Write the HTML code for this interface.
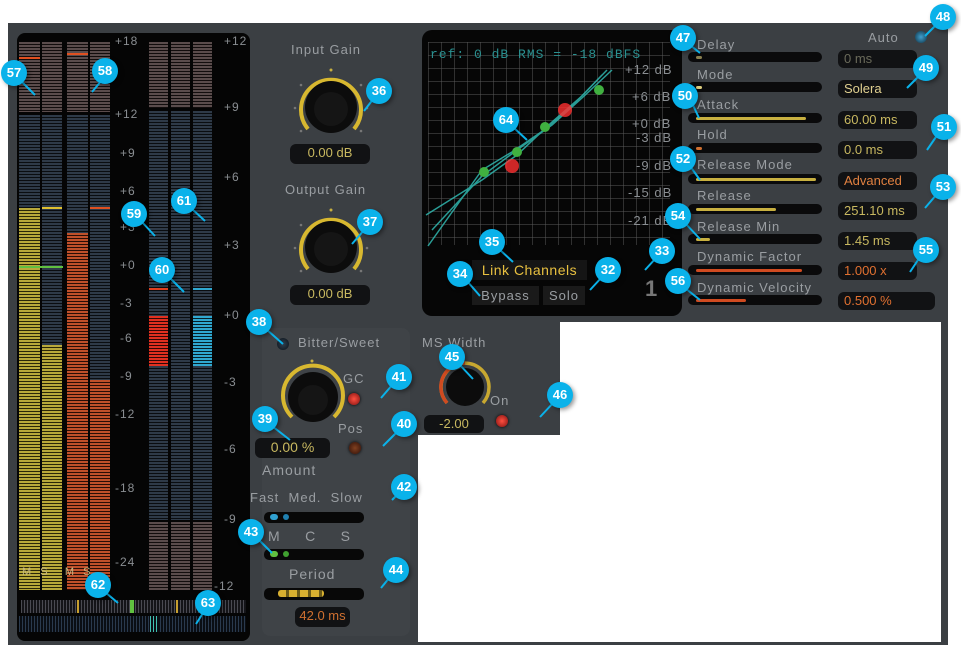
<!DOCTYPE html>
<html><head><meta charset="utf-8"><style>
*{margin:0;padding:0;box-sizing:border-box}
body{width:961px;height:649px;background:#fff;position:relative;overflow:hidden;font-family:"Liberation Sans","DejaVu Sans",sans-serif}
.a{position:absolute}
.t{position:absolute;color:#9a9ea2;font-size:13px;letter-spacing:1px;white-space:nowrap}
.sc{position:absolute;color:#8a8e92;font-size:12px;letter-spacing:1px}
.vb{position:absolute;background:#111214;border-radius:6px;color:#c8b860;font-size:13px;padding-left:6px;line-height:18px;white-space:nowrap}
.sl{position:absolute;background:#0a0a0b;border-radius:6px;height:10px;width:134px;left:688px}
.sf{position:absolute;height:3px;top:4px;left:8px;border-radius:2px}
.c{position:absolute;width:26px;height:26px;border-radius:50%;background:#0ab2ea;color:#fff;font-size:13px;font-weight:bold;text-align:center;line-height:26px;box-shadow:2px 2px 4px rgba(0,0,0,.4);z-index:5}
.col{position:absolute;background:repeating-linear-gradient(#2e3a48 0 2px,#0a0d10 2px 3px)}
.br{background:repeating-linear-gradient(#5a4c4c 0 2px,#120d0d 2px 3px)}
.ye{background:repeating-linear-gradient(#b8a83a 0 2px,#2a2608 2px 3px)}
.or{background:repeating-linear-gradient(#c0502a 0 2px,#2a0e06 2px 3px)}
.rd{background:repeating-linear-gradient(#e03020 0 2px,#300806 2px 3px)}
.cy{background:repeating-linear-gradient(#30a8d0 0 2px,#062028 2px 3px)}
.led{position:absolute;width:12px;height:12px;border-radius:50%;background:radial-gradient(#ff5040,#801010);box-shadow:0 0 3px #000}
</style></head><body>
<div class="a" style="left:8px;top:23px;width:940px;height:622px;background:#3b3f43"></div>
<!-- meters -->
<div class="a" style="left:17px;top:33px;width:233px;height:608px;background:#050505;border-radius:8px"></div>
<div class="col br" style="left:19px;top:42px;width:21px;height:70px"></div>
<div class="col br" style="left:42px;top:42px;width:20px;height:70px"></div>
<div class="col br" style="left:67px;top:42px;width:21px;height:70px"></div>
<div class="col br" style="left:90px;top:42px;width:20px;height:70px"></div>
<div class="col" style="left:19px;top:115px;width:21px;height:93px"></div>
<div class="col ye" style="left:19px;top:208px;width:21px;height:382px"></div>
<div class="col" style="left:42px;top:115px;width:20px;height:230px"></div>
<div class="col ye" style="left:42px;top:345px;width:20px;height:245px"></div>
<div class="col" style="left:67px;top:115px;width:21px;height:118px"></div>
<div class="col or" style="left:67px;top:233px;width:21px;height:357px"></div>
<div class="col" style="left:90px;top:115px;width:20px;height:265px"></div>
<div class="col or" style="left:90px;top:380px;width:20px;height:210px"></div>
<div class="a" style="left:19px;top:266px;width:44px;height:2px;background:#60c040"></div>
<div class="a" style="left:42px;top:207px;width:20px;height:2px;background:#e0c030"></div>
<div class="a" style="left:90px;top:207px;width:20px;height:2px;background:#e05020"></div>
<div class="a" style="left:19px;top:57px;width:21px;height:2px;background:#e05020"></div>
<div class="a" style="left:67px;top:53px;width:21px;height:2px;background:#e05020"></div>
<div class="t" style="left:22px;top:566px;color:#c8b880;font-size:11px">M&nbsp;&nbsp;S&nbsp;&nbsp;&nbsp;&nbsp;M&nbsp;&nbsp;S</div>
<div class="sc" style="left:115px;top:34px">+18</div><div class="sc" style="left:115px;top:107px">+12</div>
<div class="sc" style="left:120px;top:146px">+9</div><div class="sc" style="left:120px;top:184px">+6</div>
<div class="sc" style="left:120px;top:220px">+3</div><div class="sc" style="left:120px;top:258px">+0</div>
<div class="sc" style="left:120px;top:296px">-3</div><div class="sc" style="left:120px;top:331px">-6</div>
<div class="sc" style="left:120px;top:369px">-9</div><div class="sc" style="left:115px;top:407px">-12</div>
<div class="sc" style="left:115px;top:481px">-18</div><div class="sc" style="left:115px;top:555px">-24</div>
<div class="col br" style="left:149px;top:42px;width:19px;height:66px"></div>
<div class="col br" style="left:171px;top:42px;width:19px;height:66px"></div>
<div class="col br" style="left:193px;top:42px;width:19px;height:66px"></div>
<div class="col" style="left:149px;top:111px;width:19px;height:205px"></div>
<div class="col" style="left:171px;top:111px;width:19px;height:409px"></div>
<div class="col" style="left:193px;top:111px;width:19px;height:205px"></div>
<div class="col rd" style="left:149px;top:316px;width:19px;height:50px"></div>
<div class="col cy" style="left:193px;top:316px;width:19px;height:50px"></div>
<div class="col" style="left:149px;top:366px;width:19px;height:154px"></div>
<div class="col" style="left:193px;top:366px;width:19px;height:154px"></div>
<div class="col br" style="left:149px;top:522px;width:19px;height:68px"></div>
<div class="col br" style="left:171px;top:522px;width:19px;height:68px"></div>
<div class="col br" style="left:193px;top:522px;width:19px;height:68px"></div>
<div class="a" style="left:149px;top:288px;width:19px;height:2px;background:#e04020"></div>
<div class="a" style="left:193px;top:288px;width:19px;height:2px;background:#30a8d0"></div>
<div class="sc" style="left:224px;top:34px">+12</div><div class="sc" style="left:224px;top:100px">+9</div>
<div class="sc" style="left:224px;top:170px">+6</div><div class="sc" style="left:224px;top:238px">+3</div>
<div class="sc" style="left:224px;top:308px">+0</div><div class="sc" style="left:224px;top:375px">-3</div>
<div class="sc" style="left:224px;top:442px">-6</div><div class="sc" style="left:224px;top:512px">-9</div>
<div class="sc" style="left:214px;top:579px">-12</div>
<div class="a" style="left:21px;top:600px;width:225px;height:13px;background:repeating-linear-gradient(90deg,#4a4a52 0 1px,#141418 1px 3px)"></div>
<div class="a" style="left:130px;top:600px;width:4px;height:13px;background:#60c040"></div>
<div class="a" style="left:77px;top:600px;width:2px;height:13px;background:#c8a030"></div>
<div class="a" style="left:176px;top:600px;width:2px;height:13px;background:#c8a030"></div>
<div class="a" style="left:19px;top:616px;width:227px;height:16px;background:repeating-linear-gradient(90deg,#2a3a4e 0 1px,#0a0e14 1px 3px)"></div>
<div class="a" style="left:150px;top:616px;width:8px;height:16px;background:repeating-linear-gradient(90deg,#40c0b0 0 1px,#0a0e14 1px 3px)"></div>
<!-- gain knobs -->
<div class="t" style="left:291px;top:42px">Input Gain</div>
<svg class="a" style="left:286px;top:63px" width="90" height="90"><g fill="#777"><circle cx="45" cy="7" r="1.5" fill="#c8b040"/><circle cx="15" cy="22" r="1.3"/><circle cx="75" cy="22" r="1.3"/><circle cx="9" cy="45" r="1.3"/><circle cx="81" cy="45" r="1.3"/><circle cx="15" cy="68" r="1.3"/><circle cx="75" cy="68" r="1.3"/></g><path d="M22 66 A30 30 0 1 1 68 66" stroke="#d8b830" stroke-width="4" fill="none"/><circle cx="45" cy="44" r="26" fill="#0c0c0c"/><circle cx="45" cy="46" r="17" fill="#151515"/></svg>
<div class="vb" style="left:290px;top:144px;width:80px;height:20px;text-align:center;padding:0">0.00 dB</div>
<div class="t" style="left:285px;top:182px">Output Gain</div>
<svg class="a" style="left:286px;top:203px" width="90" height="90"><g fill="#777"><circle cx="45" cy="7" r="1.5" fill="#c8b040"/><circle cx="15" cy="22" r="1.3"/><circle cx="75" cy="22" r="1.3"/><circle cx="9" cy="45" r="1.3"/><circle cx="81" cy="45" r="1.3"/><circle cx="15" cy="68" r="1.3"/><circle cx="75" cy="68" r="1.3"/></g><path d="M22 66 A30 30 0 1 1 68 66" stroke="#d8b830" stroke-width="4" fill="none"/><circle cx="45" cy="44" r="26" fill="#0c0c0c"/><circle cx="45" cy="46" r="17" fill="#151515"/></svg>
<div class="vb" style="left:290px;top:285px;width:80px;height:20px;text-align:center;padding:0">0.00 dB</div>
<!-- bitter sweet panel -->
<div class="a" style="left:262px;top:328px;width:148px;height:308px;background:#3f4347;border-radius:8px"></div>
<div class="a" style="left:277px;top:338px;width:12px;height:12px;border-radius:50%;background:radial-gradient(#304050,#0c1218)"></div>
<div class="t" style="left:298px;top:335px;font-size:13px">Bitter/Sweet</div>
<svg class="a" style="left:252px;top:355px" width="110" height="80"><path d="M40 62 A30 30 0 1 1 82 62" stroke="#d8b830" stroke-width="4" fill="none"/><circle cx="61" cy="42" r="25" fill="#0c0c0c"/><circle cx="61" cy="45" r="15" fill="#151515"/><circle cx="60" cy="6" r="1.5" fill="#c8b040"/></svg>
<div class="vb" style="left:255px;top:438px;width:75px;height:20px;text-align:center;padding:0;font-size:14px">0.00 %</div>
<div class="t" style="left:262px;top:462px;font-size:14px">Amount</div>
<div class="t" style="left:250px;top:490px">Fast&nbsp;&nbsp;Med.&nbsp;&nbsp;Slow</div>
<div class="a" style="left:264px;top:512px;width:100px;height:11px;background:#080808;border-radius:5px"></div>
<div class="a" style="left:270px;top:514px;width:8px;height:6px;border-radius:3px;background:#30a0d0"></div>
<div class="a" style="left:283px;top:514px;width:6px;height:6px;border-radius:3px;background:#2080b0"></div>
<div class="t" style="left:268px;top:528px;font-size:14px">M&nbsp;&nbsp;&nbsp;&nbsp;&nbsp;C&nbsp;&nbsp;&nbsp;&nbsp;&nbsp;S</div>
<div class="a" style="left:264px;top:549px;width:100px;height:11px;background:#080808;border-radius:5px"></div>
<div class="a" style="left:270px;top:551px;width:8px;height:6px;border-radius:3px;background:#60c040"></div>
<div class="a" style="left:283px;top:551px;width:6px;height:6px;border-radius:3px;background:#40a030"></div>
<div class="t" style="left:289px;top:566px;font-size:14px">Period</div>
<div class="a" style="left:264px;top:588px;width:100px;height:12px;background:#080808;border-radius:5px"></div>
<div class="a" style="left:278px;top:590px;width:46px;height:7px;border-radius:3px;background:repeating-linear-gradient(90deg,#d8b030 0 8px,#6a5a18 8px 11px)"></div>
<div class="vb" style="left:295px;top:607px;width:55px;height:20px;text-align:center;padding:0;color:#d07030">42.0 ms</div>
<div class="t" style="left:343px;top:371px">GC</div>
<div class="led" style="left:348px;top:393px"></div>
<div class="t" style="left:338px;top:421px">Pos</div>
<div class="led" style="left:349px;top:442px;background:radial-gradient(#804020,#301008)"></div>
<!-- ms width -->
<div class="t" style="left:422px;top:335px">MS Width</div>
<svg class="a" style="left:430px;top:355px" width="70" height="60"><path d="M17 48 A24 24 0 1 1 53 48" stroke="#c8a830" stroke-width="3.5" fill="none"/><path d="M17 48 A24 24 0 0 1 35 8" stroke="#d04a20" stroke-width="3.5" fill="none"/><circle cx="35" cy="32" r="19" fill="#0c0c0c"/></svg>
<div class="vb" style="left:424px;top:415px;width:60px;height:18px;text-align:center;padding:0">-2.00</div>
<div class="t" style="left:490px;top:393px">On</div>
<div class="led" style="left:496px;top:415px"></div>
<!-- graph -->
<div class="a" style="left:422px;top:30px;width:260px;height:286px;background:#060606;border-radius:10px"></div>
<div class="a" style="left:428px;top:42px;width:242px;height:203px;background-image:repeating-linear-gradient(90deg,rgba(90,90,90,.5) 0 1px,transparent 1px 13px),repeating-linear-gradient(rgba(90,90,90,.5) 0 1px,transparent 1px 13px)"></div>
<svg class="a" style="left:422px;top:30px" width="260" height="230"><g stroke="#30b8b0" fill="none" stroke-width="1.5" opacity=".85"><path d="M6 216 L60 140 L90 122 L125 98 L150 76 L185 40"/><path d="M10 200 L60 146 L95 120 L130 95 L160 68 L190 40"/><path d="M4 185 L60 150 L95 125 L130 92 L160 66 L180 45"/></g><g fill="#40b040"><circle cx="62" cy="142" r="5"/><circle cx="95" cy="122" r="5"/><circle cx="123" cy="97" r="5"/><circle cx="177" cy="60" r="5"/></g><g fill="#ff3030" opacity=".8"><circle cx="90" cy="136" r="7"/><circle cx="143" cy="80" r="7"/></g></svg>
<div class="a" style="left:430px;top:47px;color:#2a9090;font-size:13px;font-family:'Liberation Mono',monospace;letter-spacing:1px">ref: 0 dB RMS = -18 dBFS</div>
<div class="sc" style="left:625px;top:62px;font-size:13px">+12 dB</div><div class="sc" style="left:632px;top:89px;font-size:13px">+6 dB</div>
<div class="sc" style="left:632px;top:116px;font-size:13px">+0 dB</div><div class="sc" style="left:636px;top:130px;font-size:13px">-3 dB</div>
<div class="sc" style="left:636px;top:158px;font-size:13px">-9 dB</div><div class="sc" style="left:628px;top:185px;font-size:13px">-15 dB</div>
<div class="sc" style="left:628px;top:213px;font-size:13px">-21 dB</div>
<div class="a" style="left:472px;top:260px;width:115px;height:20px;background:#151515;color:#e8c040;font-size:14px;line-height:20px;text-align:center;letter-spacing:.5px">Link Channels</div>
<div class="a" style="left:472px;top:286px;width:67px;height:19px;background:#1a1a1a;color:#9a9ea2;font-size:13px;line-height:19px;text-align:center;letter-spacing:1px">Bypass</div>
<div class="a" style="left:543px;top:286px;width:42px;height:19px;background:#1a1a1a;color:#9a9ea2;font-size:13px;line-height:19px;text-align:center;letter-spacing:1px">Solo</div>
<div class="a" style="left:645px;top:276px;color:#777;font-size:22px;font-weight:bold">1</div>
<!-- right params -->
<div class="t" style="left:868px;top:30px">Auto</div>
<div class="a" style="left:915px;top:31px;width:12px;height:12px;border-radius:50%;background:radial-gradient(#40a0d0,#103040)"></div>
<div class="t" style="left:697px;top:37px">Delay</div>
<div class="sl" style="top:52px"><div class="sf" style="width:6px;background:#8a8050"></div></div>
<div class="vb" style="left:838px;top:50px;width:79px;height:18px;color:#6a6a5a">0 ms</div>
<div class="t" style="left:697px;top:67px">Mode</div>
<div class="sl" style="top:82px"><div class="sf" style="width:6px;background:#e0d080"></div></div>
<div class="vb" style="left:838px;top:80px;width:79px;height:18px;color:#e0d090">Solera</div>
<div class="t" style="left:697px;top:97px">Attack</div>
<div class="sl" style="top:113px"><div class="sf" style="width:110px;background:#c8b040"></div></div>
<div class="vb" style="left:838px;top:111px;width:79px;height:18px">60.00 ms</div>
<div class="t" style="left:697px;top:127px">Hold</div>
<div class="sl" style="top:143px"><div class="sf" style="width:6px;background:#d07030"></div></div>
<div class="vb" style="left:838px;top:141px;width:79px;height:18px">0.0 ms</div>
<div class="t" style="left:697px;top:157px">Release Mode</div>
<div class="sl" style="top:174px"><div class="sf" style="width:120px;background:#c8b040"></div></div>
<div class="vb" style="left:838px;top:172px;width:79px;height:18px;color:#e08040">Advanced</div>
<div class="t" style="left:697px;top:188px">Release</div>
<div class="sl" style="top:204px"><div class="sf" style="width:80px;background:#c8b040"></div></div>
<div class="vb" style="left:838px;top:202px;width:79px;height:18px">251.10 ms</div>
<div class="t" style="left:697px;top:219px">Release Min</div>
<div class="sl" style="top:234px"><div class="sf" style="width:14px;background:#c8b040"></div></div>
<div class="vb" style="left:838px;top:232px;width:79px;height:18px">1.45 ms</div>
<div class="t" style="left:697px;top:249px">Dynamic Factor</div>
<div class="sl" style="top:265px"><div class="sf" style="width:106px;background:#d04a20"></div></div>
<div class="vb" style="left:838px;top:262px;width:79px;height:18px;color:#e07030">1.000 x</div>
<div class="t" style="left:697px;top:280px">Dynamic Velocity</div>
<div class="sl" style="top:295px"><div class="sf" style="width:50px;background:#d04a20"></div></div>
<div class="vb" style="left:838px;top:292px;width:97px;height:18px;color:#e07030">0.500 %</div>
<!-- white cutout -->
<div class="a" style="left:560px;top:322px;width:381px;height:320px;background:#fff"></div>
<div class="a" style="left:418px;top:435px;width:150px;height:207px;background:#fff"></div>
<!-- callouts -->
<div class="c" style="left:1px;top:60px">57</div><div class="c" style="left:92px;top:58px">58</div>
<div class="c" style="left:121px;top:201px">59</div><div class="c" style="left:171px;top:188px">61</div>
<div class="c" style="left:149px;top:257px">60</div><div class="c" style="left:85px;top:572px">62</div>
<div class="c" style="left:195px;top:590px">63</div><div class="c" style="left:366px;top:78px">36</div>
<div class="c" style="left:357px;top:209px">37</div><div class="c" style="left:246px;top:309px">38</div>
<div class="c" style="left:252px;top:406px">39</div><div class="c" style="left:386px;top:364px">41</div>
<div class="c" style="left:391px;top:411px">40</div><div class="c" style="left:391px;top:474px">42</div>
<div class="c" style="left:238px;top:519px">43</div><div class="c" style="left:383px;top:557px">44</div>
<div class="c" style="left:439px;top:344px">45</div><div class="c" style="left:547px;top:382px">46</div>
<div class="c" style="left:670px;top:25px">47</div><div class="c" style="left:930px;top:4px">48</div>
<div class="c" style="left:913px;top:55px">49</div><div class="c" style="left:672px;top:83px">50</div>
<div class="c" style="left:931px;top:114px">51</div><div class="c" style="left:670px;top:146px">52</div>
<div class="c" style="left:930px;top:174px">53</div><div class="c" style="left:665px;top:203px">54</div>
<div class="c" style="left:913px;top:237px">55</div><div class="c" style="left:665px;top:268px">56</div>
<div class="c" style="left:493px;top:107px">64</div><div class="c" style="left:479px;top:229px">35</div>
<div class="c" style="left:447px;top:261px">34</div><div class="c" style="left:649px;top:238px">33</div>
<div class="c" style="left:595px;top:257px">32</div>
<svg class="a" style="left:0;top:0;z-index:4" width="961" height="649"><g stroke="#0ab2ea" stroke-width="2"><path d="M20 80 L35 95"/><path d="M102 80 L92 92"/><path d="M141 221 L155 236"/><path d="M191 208 L205 221"/><path d="M169 277 L184 292"/><path d="M105 592 L118 603"/><path d="M205 610 L196 624"/><path d="M374 98 L364 111"/><path d="M365 229 L352 244"/><path d="M266 329 L283 344"/><path d="M272 426 L290 440"/><path d="M393 384 L381 398"/><path d="M398 431 L383 446"/><path d="M398 494 L392 500"/><path d="M258 539 L272 553"/><path d="M390 577 L381 588"/><path d="M459 364 L473 379"/><path d="M554 402 L540 417"/><path d="M690 45 L700 53"/><path d="M937 24 L925 36"/><path d="M920 75 L907 88"/><path d="M692 103 L699 118"/><path d="M938 134 L927 150"/><path d="M690 166 L700 180"/><path d="M937 194 L925 208"/><path d="M685 223 L700 239"/><path d="M920 257 L910 272"/><path d="M685 288 L700 300"/><path d="M513 127 L527 140"/><path d="M499 249 L513 262"/><path d="M467 281 L480 296"/><path d="M656 258 L645 270"/><path d="M602 277 L590 290"/></g></svg>
</body></html>
